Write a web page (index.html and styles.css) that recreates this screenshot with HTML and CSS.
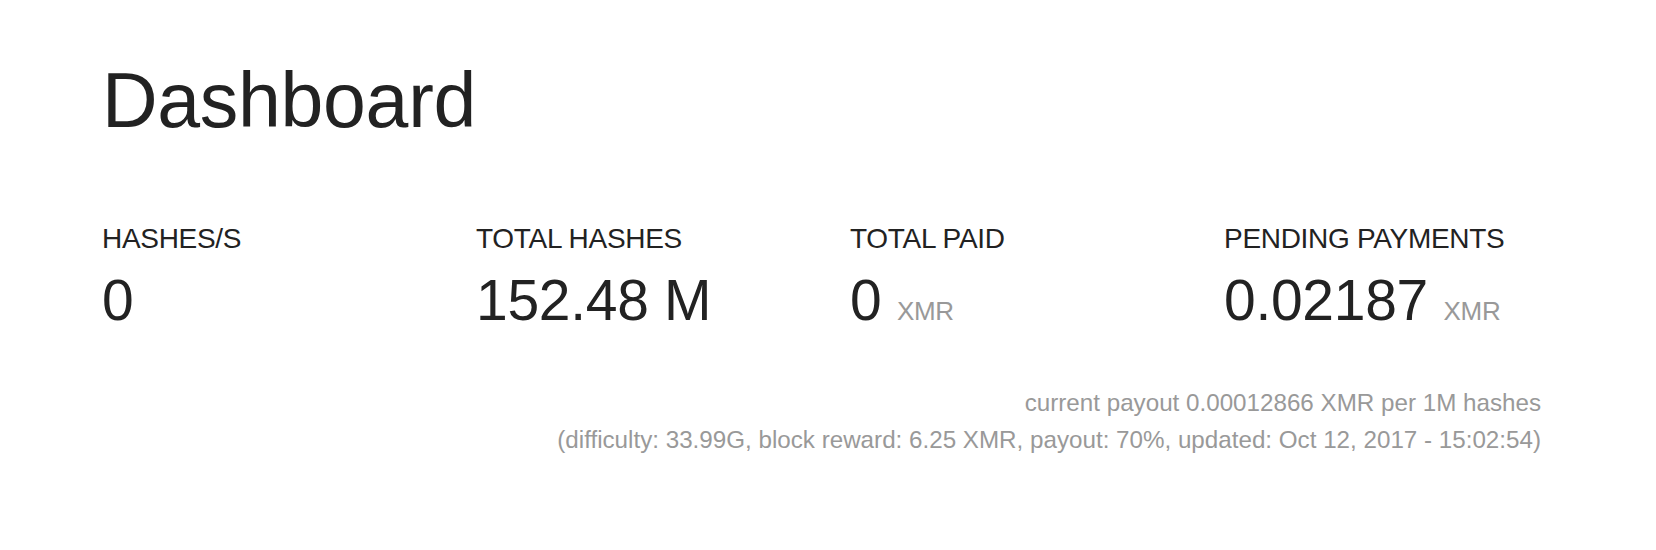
FILE: index.html
```html
<!DOCTYPE html>
<html lang="en">
<head>
<meta charset="utf-8">
<title>Dashboard</title>
<link rel="stylesheet" href="styles.css">
</head>
<body>
<main class="page">
  <h1 class="title">Dashboard</h1>
  <section class="stats">
    <div class="stat">
      <div class="stat-label">Hashes/s</div>
      <div class="stat-value">0</div>
    </div>
    <div class="stat">
      <div class="stat-label">Total Hashes</div>
      <div class="stat-value">152.48 M</div>
    </div>
    <div class="stat">
      <div class="stat-label">Total Paid</div>
      <div class="stat-value">0 <span class="unit">XMR</span></div>
    </div>
    <div class="stat">
      <div class="stat-label">Pending Payments</div>
      <div class="stat-value">0.02187 <span class="unit">XMR</span></div>
    </div>
  </section>
  <div class="payout">
    <p class="payout-line">current payout 0.00012866 XMR per 1M hashes</p>
    <p class="payout-line">(difficulty: 33.99G, block reward: 6.25 XMR, payout: 70%, updated: Oct 12, 2017 - 15:02:54)</p>
  </div>
</main>
</body>
</html>
```

FILE: styles.css
```css
html, body {
  margin: 0;
  padding: 0;
  background: #fff;
}

body {
  font-family: "Liberation Sans", Arial, Helvetica, sans-serif;
  color: #222;
}

.page {
  width: 1439px;
  margin-left: 102px;
  padding-top: 62px;
}

.title {
  margin: 0;
  font-size: 77px;
  line-height: 77px;
  font-weight: 400;
  letter-spacing: -0.3px;
}

.stats {
  display: grid;
  grid-template-columns: 374px 374px 374px 1fr;
  margin-top: 86px;
}

.stat-label {
  font-size: 28px;
  line-height: 28px;
  text-transform: uppercase;
  letter-spacing: -0.3px;
}

.stat-value {
  margin-top: 19px;
  font-size: 57px;
  line-height: 57px;
  letter-spacing: -0.3px;
}

.unit {
  font-size: 26px;
  color: #999;
  letter-spacing: -0.3px;
}

.payout {
  margin-top: 44px;
  text-align: right;
  color: #999;
  font-size: 24.2px;
  line-height: 37px;
}

.payout-line {
  margin: 0;
}
```
